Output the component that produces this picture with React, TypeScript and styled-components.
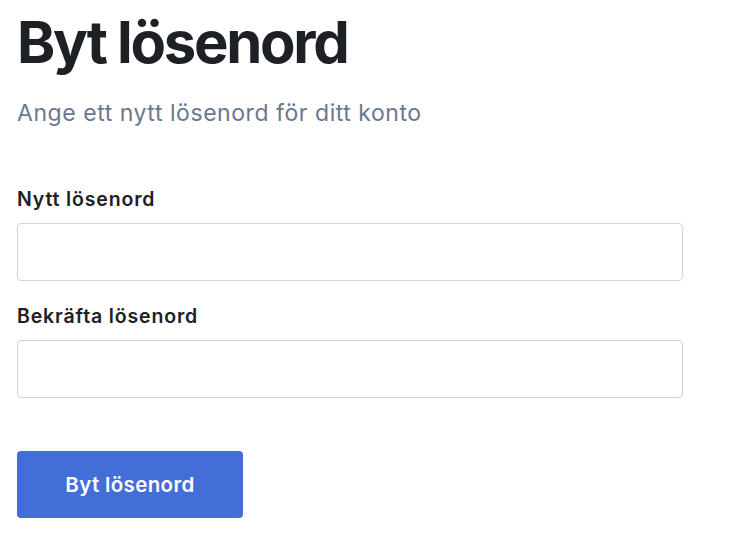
import React from "react";
import styled, { createGlobalStyle } from "styled-components";

const Global = createGlobalStyle`
  html, body { margin: 0; padding: 0; background: #ffffff; }
  body { font-family: Inter, "Noto Sans", sans-serif; color: #1d2025; }
  * { box-sizing: border-box; }
`;

const Page = styled.main`
  padding: 0 17px;
  width: 700px;
  display: flex;
  flex-direction: column;
`;

const Title = styled.h1`
  margin: 8px 0 0;
  font-size: 58px;
  line-height: 68px;
  font-weight: 700;
  letter-spacing: -2.3px;
  color: #1d2025;
`;

const Subtitle = styled.p`
  margin: 23px 0 0;
  font-size: 23px;
  line-height: 28px;
  letter-spacing: 0.55px;
  color: #6a7890;
`;

const Form = styled.form`
  margin-top: 60px;
  display: flex;
  flex-direction: column;
  gap: 23px;
`;

const Field = styled.div`
  display: flex;
  flex-direction: column;
  gap: 12px;
`;

const Label = styled.label`
  font-size: 19.5px;
  line-height: 24px;
  font-weight: 600;
  letter-spacing: 0.85px;
  color: #1d2025;
`;

const Input = styled.input`
  height: 58px;
  width: 100%;
  border: 1px solid #cfd4da;
  border-radius: 4px;
  padding: 0 14px;
  font-size: 18px;
  font-family: inherit;
  outline: none;
`;

const Actions = styled.div`
  margin-top: 30px;
  display: flex;
`;

const Button = styled.button`
  width: 226px;
  height: 67px;
  border: none;
  border-radius: 4px;
  background: #446ed7;
  color: #ffffff;
  font-family: inherit;
  font-size: 20.5px;
  font-weight: 600;
  letter-spacing: 0.35px;
  cursor: pointer;
`;

export default function App() {
  return (
    <>
      <Global />
      <Page>
        <Title>Byt lösenord</Title>
        <Subtitle>Ange ett nytt lösenord för ditt konto</Subtitle>
        <Form onSubmit={(e) => e.preventDefault()}>
          <Field>
            <Label htmlFor="new">Nytt lösenord</Label>
            <Input id="new" type="password" />
          </Field>
          <Field>
            <Label htmlFor="confirm">Bekräfta lösenord</Label>
            <Input id="confirm" type="password" />
          </Field>
          <Actions>
            <Button type="submit">Byt lösenord</Button>
          </Actions>
        </Form>
      </Page>
    </>
  );
}
